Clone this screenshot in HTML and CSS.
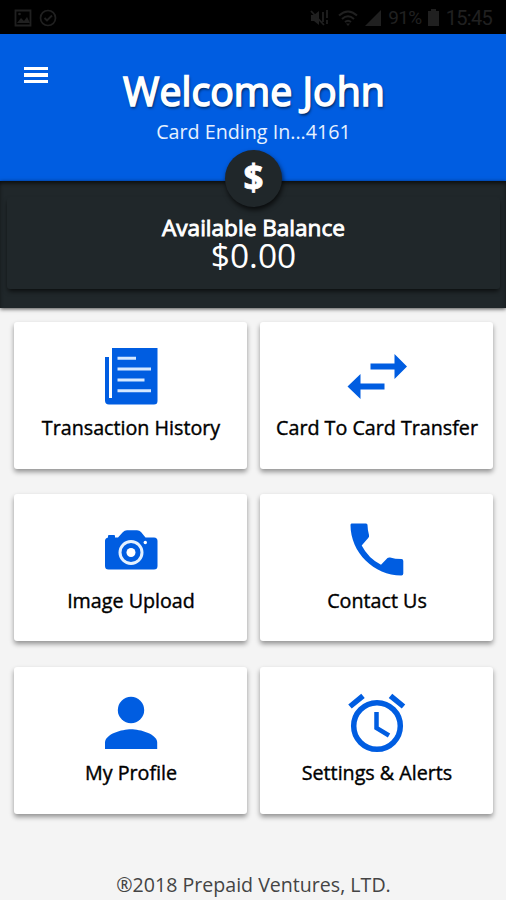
FILE: index.html
```
<!DOCTYPE html>
<html lang="en">
<head>
  <meta charset="UTF-8">
  <meta name="viewport" content="width=device-width, initial-scale=1.0">
  <title>Prepaid Ventures</title>
  <link rel="stylesheet" href="styles.css">
</head>
<body>
  <div class="statusbar">
    <div class="status-left">
      <svg width="18" height="18" viewBox="0 0 18 18"><path d="M1.5 1.5h15v15h-15z" fill="none" stroke="#202020" stroke-width="1.8"/><path d="M3 14l4-5 3 3 3-4 3 6z" fill="#202020"/><circle cx="5.5" cy="5" r="1.3" fill="#202020"/></svg>
      <svg width="18" height="18" viewBox="0 0 18 18"><circle cx="9" cy="9" r="7.5" fill="none" stroke="#202020" stroke-width="1.7"/><path d="M5.5 9l2.5 2.5 5-5" fill="none" stroke="#202020" stroke-width="1.8"/></svg>
    </div>
    <div class="status-right">
      <svg class="mute" width="19" height="18" viewBox="0 0 19 18"><path d="M1 6h3l5-4v14l-5-4H1z" fill="#202020"/><path d="M1 2l13 14M13 3v10M17 1v8M17 11v4" fill="none" stroke="#202020" stroke-width="1.8"/></svg>
      <svg class="wifi" width="20" height="16" viewBox="0 0 20 16"><path d="M1 5.5q9-8 18 0M4 9q6-5.500 12 0M7 12q3-2.500 6 0" fill="none" stroke="#202020" stroke-width="2"/><path d="M8 13.5h4L10 16z" fill="#202020"/></svg>
      <svg class="signal" width="16" height="16" viewBox="0 0 16 16"><path d="M16 0v16H0z" fill="#202020"/></svg>
      <span class="percent">91%</span>
      <svg class="battery" width="11" height="17" viewBox="0 0 11 17"><path d="M3 0h5v2h3v15H0V2h3z" fill="#202020"/></svg>
      <span class="time">15:45</span>
    </div>
  </div>

  <header class="header">
    <button class="menu" aria-label="Menu">
      <span></span>
      <span></span>
      <span></span>
    </button>
    <h1>Welcome John</h1>
    <p class="card-number">Card Ending In...4161</p>
  </header>

  <section class="balance">
    <div class="coin">$</div>
    <div class="balance-box">
      <h2>Available Balance</h2>
      <p class="amount">$0.00</p>
    </div>
  </section>

  <main class="tiles">
    <a class="tile">
      <svg class="icon" viewBox="0 0 70 70">
        <path d="M16 6h45.500v53q0 3.500-3.500 3.500H13q-4 0-4-4V15h4v41h3z"/>
        <path class="lines" d="M21.500 16.300h18.500M21.500 27h33.500M21.500 38h27M21.500 48.700h33.500"/>
      </svg>
      <span>Transaction History</span>
    </a>
    <a class="tile">
      <svg class="icon" viewBox="0 0 70 70">
        <path d="M28.500 21.500h24V12L65 24.500 52.500 37v-9.500h-24z"/>
        <path d="M42.500 41.500H18.500V32L5.500 44.500 18.500 57v-9.500h24z"/>
      </svg>
      <span>Card To Card Transfer</span>
    </a>
    <a class="tile">
      <svg class="icon" viewBox="0 0 70 70">
        <path d="M12 23.500v-1.500q0-1 1-1h5q1 0 1 1v1.500h3l5-5.500q1.500-1.700 4-1.700h10q2.500 0 4 1.700l4.500 5.500h8.500q3.500 0 3.500 3.500v25q0 3.500-3.500 3.500H12.500Q9 55.500 9 52V27q0-3 3-3.500z"/>
        <circle class="ring" cx="35" cy="38.5" r="11"/>
        <circle class="hole" cx="35" cy="38.5" r="4.5"/>
        <circle class="hole" cx="49.3" cy="28.5" r="1.7"/>
      </svg>
      <span>Image Upload</span>
    </a>
    <a class="tile">
      <svg class="icon" viewBox="0 0 70 70">
        <path d="M9.500 9.500h14.500q1.500 0 1.500 1.500 0 4 1.500 10 .4 1.800-.6 2.800L19.700 31.500q6.500 12.700 19.300 19.300l6.500-6.700q1-1 2.600-.6 4.900 1.500 11.400 1.500 1.800 0 1.800 2v12.500q0 2-2 2C32 61.500 8.500 38.500 8.500 11q0-1.500 1-1.500z"/>
      </svg>
      <span>Contact Us</span>
    </a>
    <a class="tile">
      <svg class="icon" viewBox="0 0 70 70">
        <circle cx="35" cy="23" r="13.2"/>
        <path d="M9 62V55.500c0-8.500 17-13.300 26-13.300S61.200 47 61.200 55.500v6.500z"/>
      </svg>
      <span>My Profile</span>
    </a>
    <a class="tile">
      <svg class="icon" viewBox="0 0 70 70">
        <circle class="clock" cx="35" cy="39" r="23.3"/>
        <path class="bells" d="M8 19.500l13-10.700M48.500 8.800l13 10.700"/>
        <path class="hands" d="M34.500 25v16l12.500 7.500"/>
      </svg>
      <span>Settings &amp; Alerts</span>
    </a>
  </main>

  <footer class="footer">®2018 Prepaid Ventures, LTD.</footer>
</body>
</html>
```
FILE: styles.css
```
* {
  box-sizing: border-box;
}

body {
  margin: 0;
  height: 900px;
  overflow: hidden;
  background: #f4f4f4;
  font-family: "Open Sans", "Noto Sans", sans-serif;
  color: #000;
}

h1,
h2,
p {
  margin: 0;
}

.statusbar {
  display: flex;
  justify-content: space-between;
  height: 34px;
  padding: 1px 14px 0;
  background: #000;
  color: #202020;
  font-family: Roboto, sans-serif;
  font-size: 20px;
}

.status-left,
.status-right {
  display: flex;
  align-items: center;
}

.status-left {
  gap: 7px;
}

.wifi {
  margin-left: 9px;
}

.signal {
  margin-left: 7px;
}

.percent {
  margin-left: 7px;
  font-size: 19px;
  letter-spacing: -0.6px;
}

.battery {
  margin-left: 6px;
}

.time {
  margin-left: 7px;
  letter-spacing: -0.7px;
}

.header {
  position: relative;
  height: 147px;
  padding-top: 30px;
  background: #005de1;
  color: #fff;
  text-align: center;
}

.header h1 {
  padding-left: 2px;
  font-size: 39.3px;
  line-height: 54px;
  font-weight: 400;
  -webkit-text-stroke: 1.6px #fff;
  text-shadow: 1px 2px 3px rgba(0, 0, 0, 0.7);
}

.card-number {
  padding-left: 1px;
  font-size: 19.7px;
  line-height: 27px;
  color: #e6f1ff;
}

.menu {
  position: absolute;
  top: 33px;
  left: 24px;
  display: flex;
  flex-direction: column;
  gap: 3px;
  padding: 0;
  border: none;
  background: none;
}

.menu span {
  width: 24px;
  height: 3.3px;
  background: #fff;
}

.balance {
  position: relative;
  height: 127px;
  padding: 16px 6px 0 7px;
  background: #20272a;
  box-shadow: 0 1px 4px rgba(0, 0, 0, 0.7), inset 0 3px 4px -1px rgba(0, 0, 0, 0.7);
}

/* round badge over the edge of the header */
.coin {
  position: absolute;
  top: -31px;
  left: 50%;
  width: 57px;
  height: 57px;
  margin-left: -28px;
  border-radius: 50%;
  background: #20272a;
  box-shadow: 1px 3px 5px rgba(0, 0, 0, 0.7);
  color: #fff;
  font-size: 35px;
  font-weight: 700;
  line-height: 54px;
  text-align: center;
  -webkit-text-stroke: 0.8px #fff;
}

.balance-box {
  height: 92px;
  padding-top: 17px;
  border-radius: 3px;
  box-shadow: 0 3px 5px -1px rgba(0, 0, 0, 0.7);
  color: #fff;
  text-align: center;
}

.balance-box h2 {
  font-size: 22.6px;
  line-height: 28px;
  font-weight: 400;
  -webkit-text-stroke: 0.9px #fff;
}

.amount {
  font-size: 33.5px;
  line-height: 27px;
}

.tiles {
  display: grid;
  grid-template-columns: 1fr 1fr;
  grid-auto-rows: 147px;
  gap: 25.5px 13px;
  padding: 13.5px 13px 0 14px;
}

.tile {
  display: flex;
  flex-direction: column;
  align-items: center;
  padding: 20px 0 0 1px;
  border-radius: 3px;
  background: #fff;
  box-shadow: 0 3px 5px rgba(0, 0, 0, 0.4);
  font-size: 19.7px;
  line-height: 28px;
  -webkit-text-stroke: 0.4px #000;
  white-space: nowrap;
}

.tile span {
  margin-top: 2.5px;
}

.icon {
  width: 70px;
  height: 70px;
  margin-left: -1px;
  fill: #005de1;
}

.lines {
  fill: none;
  stroke: #d5e8ff;
  stroke-width: 3;
}

.ring {
  fill: none;
  stroke: #e4f1ff;
  stroke-width: 3;
}

.hole {
  fill: #fff;
}

.clock,
.bells,
.hands {
  fill: none;
  stroke: #005de1;
  stroke-width: 5.5;
}

.hands {
  stroke-width: 4.5;
}

.footer {
  margin-top: 57px;
  padding-left: 1px;
  font-size: 19.6px;
  line-height: 28px;
  color: #444;
  text-align: center;
}
```
